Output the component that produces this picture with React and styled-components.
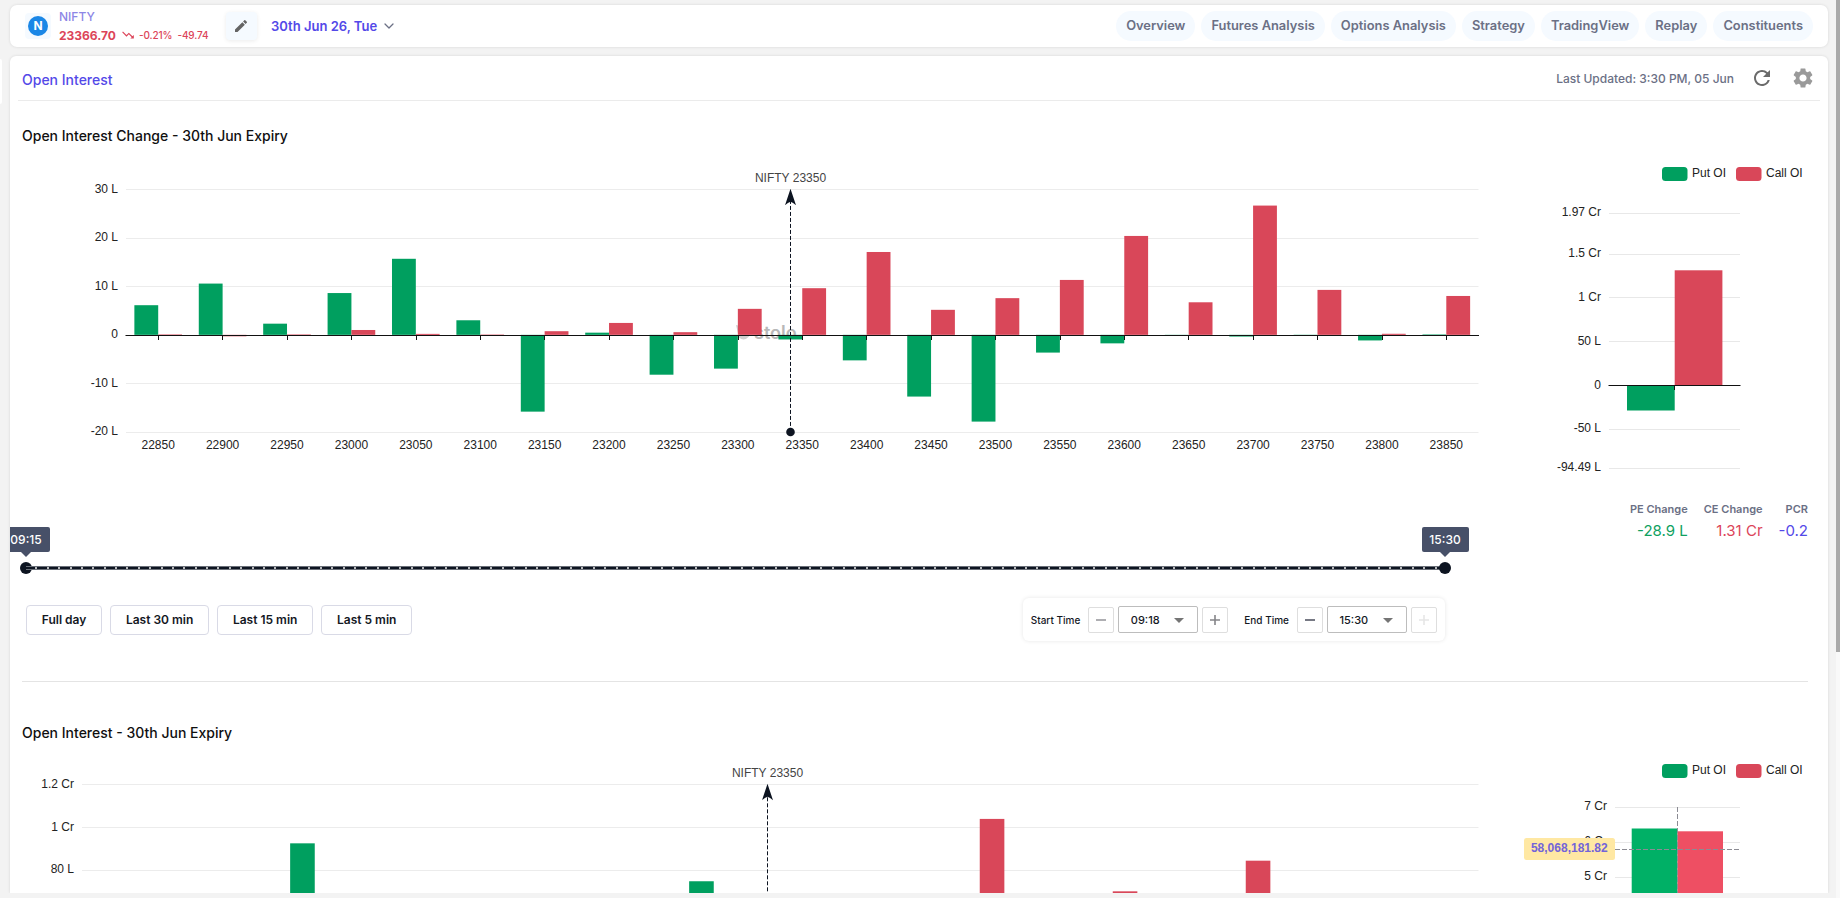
import React, { useState } from "react";
import styled, { createGlobalStyle } from "styled-components";
import { MdEdit, MdRefresh, MdSettings, MdTrendingDown, MdArrowDropDown } from "react-icons/md";
import { ChevronDown } from "lucide-react";

const GREEN = "#009f5f";
const RED = "#d94759";

const pages = [
  "Overview",
  "Futures Analysis",
  "Options Analysis",
  "Strategy",
  "TradingView",
  "Replay",
  "Constituents",
];

const strikes = Array.from({ length: 21 }, (_, i) => 22850 + i * 50);

// values in lakhs
const changePut = [
  6.1, 10.55, 2.3, 8.6, 15.65, 3, -15.8, 0.45, -8.2, -6.95, -0.95, -5.25, -12.7,
  -17.85, -3.65, -1.75, -0.15, -0.35, 0.04, -1.15, 0.1,
];
const changeCall = [
  0.1, -0.3, 0.1, 1.0, 0.2, 0.08, 0.75, 2.45, 0.55, 5.35, 9.6, 17.05, 5.15, 7.55,
  11.3, 20.35, 6.7, 26.6, 9.25, 0.22, 8.0,
];
const oiPut = [0, 0, 0, 92.4, 0, 0, 0, 0, 0, 74.7];
const oiCall = [0, 0, 0, 0, 0, 0, 0, 0, 0, 0, 0, 0, 0, 103.8, 0, 70, 0, 84.3];

const StrikeChart = ({ left, top, step, unit, ticks, zero, put, call, height, watermark }) => {
  const right = 1456.5;
  const band = (right - left) / strikes.length;
  const barWidth = band * 0.37;
  const zeroY = top + zero * step;
  const axisY = Math.round(zeroY) + 0.5;
  const bottom = top + step * (ticks.length - 1);
  const spot = Math.floor(left + band * 10.313) + 0.5;

  const bar = (value, x, color) => {
    if (!value) return null;
    const h = Math.abs(value) * unit;
    return (
      <rect
        x={x}
        y={value > 0 ? zeroY - h : zeroY}
        width={barWidth}
        height={h}
        fill={color}
      />
    );
  };

  return (
    <Chart width="1468" height={height}>
      {ticks.map((tick, i) => (
        <g key={tick}>
          <line
            x1={left}
            x2={right}
            y1={Math.round(top + i * step) + 0.5}
            y2={Math.round(top + i * step) + 0.5}
            stroke="#ececec"
          />
          <AxisLabel x={left - 8} y={Math.floor(top + i * step) + 4} textAnchor="end">
            {tick}
          </AxisLabel>
        </g>
      ))}
      {watermark && (
        <g>
          <path
            d="M714 165 l4.5 1 l2.5 6 q2.5 2 4 -1 l1 -4 q4 5 1 9.5 q-5 5.500 -10 1 z"
            fill="#cfcfcf"
          />
          <Watermark x="732" y="179">
            stolo
          </Watermark>
        </g>
      )}
      {strikes.map((strike, i) => (
        <g key={strike}>
          {bar(put[i], left + band * (i + 0.5) - barWidth, GREEN)}
          {bar(call[i], left + band * (i + 0.5), RED)}
        </g>
      ))}
      <line x1={left - 0.5} x2={right + 0.5} y1={axisY} y2={axisY} stroke="#111" />
      {strikes.map((strike, i) => {
        const x = Math.round(left + band * (i + 0.5) - 0.2) + 0.5;
        return (
          <g key={strike}>
            <line x1={x} x2={x} y1={axisY} y2={axisY + 4.5} stroke="#111" />
            <AxisLabel x={left + band * (i + 0.5)} y={Math.round(bottom + 17)} textAnchor="middle">
              {strike}
            </AxisLabel>
          </g>
        );
      })}
      <line
        x1={spot}
        x2={spot}
        y1={bottom}
        y2={top + 10}
        stroke="#0d1421"
        strokeDasharray="4 2"
      />
      <path
        d={`M${spot} ${top - 0.5} l5.5 16.5 q-3 -3 -5.5 -3.5 q-2.5 .5 -5.5 3.5 z`}
        fill="#0d1421"
      />
      <circle cx={spot} cy={bottom} r="4.3" fill="#0d1421" />
      <AxisLabel x={spot} y={Math.floor(top) - 7} textAnchor="middle" $soft>
        NIFTY 23350
      </AxisLabel>
    </Chart>
  );
};

const Legend = ({ y }) => (
  <g>
    <rect x="162" y={y} width="25.5" height="14" rx="3.5" fill={GREEN} />
    <AxisLabel x="192" y={y + 10}>
      Put OI
    </AxisLabel>
    <rect x="236" y={y} width="25.5" height="14" rx="3.5" fill={RED} />
    <AxisLabel x="266" y={y + 10}>
      Call OI
    </AxisLabel>
  </g>
);

// label, gridline y, baseline y
const totalTicks = [
  ["1.97 Cr", 53, 56],
  ["1.5 Cr", 94, 97],
  ["1 Cr", 137, 141],
  ["50 L", 181, 185],
  ["0", 225, 229],
  ["-50 L", 269, 272],
  ["-94.49 L", 308, 311],
];

const TotalChangeChart = () => (
  <Chart width="310" height="330">
    <Legend y={7} />
    {totalTicks.map(([label, y, baseline]) => (
      <g key={label}>
        <line x1="109" x2="240" y1={y + 0.5} y2={y + 0.5} stroke="#e8e8e8" />
        <AxisLabel x="101" y={baseline} textAnchor="end">
          {label}
        </AxisLabel>
      </g>
    ))}
    <rect x="127" y="225.5" width="47.7" height="25" fill={GREEN} />
    <rect x="174.7" y="110.3" width="47.7" height="115" fill={RED} />
    <path d="M108.5 225.5H240.5M174.5 225V230" stroke="#111" />
  </Chart>
);

const TotalOiChart = () => (
  <Chart width="310" height="300">
    <Legend y={6} />
    {[
      ["7 Cr", 49],
      ["6 Cr", 84],
      ["5 Cr", 119],
    ].map(([label, y]) => (
      <g key={label}>
        <line x1="115" x2="240" y1={y + 0.5} y2={y + 0.5} stroke="#e8e8e8" />
        <AxisLabel x="107" y={y + 3} textAnchor="end">
          {label}
        </AxisLabel>
      </g>
    ))}
    <rect x="131.7" y="70.5" width="45.8" height="200" fill="#00b066" />
    <rect x="177.5" y="73.3" width="45.5" height="200" fill="#ee4f63" />
    <path d="M177.5 49V300M115 91.5H240" stroke="#8b8b93" strokeDasharray="5 2" fill="none" />
    <rect x="24" y="80" width="91" height="22" rx="2.5" fill="#ffe8a3" />
    <PointerLabel x="69.3" y="94" textAnchor="middle">
      58,068,181.82
    </PointerLabel>
  </Chart>
);

const TimePicker = ({ label, value, minus, plus }) => (
  <>
    <TimeLabel>{label}</TimeLabel>
    <StepButton $color={minus}>
      <svg width="10" height="10">
        <path d="M0 5H10" stroke="currentColor" strokeWidth="1.6" />
      </svg>
    </StepButton>
    <TimeSelect>
      {value}
      <MdArrowDropDown size={24} color="#757575" />
    </TimeSelect>
    <StepButton $color={plus}>
      <svg width="10" height="10">
        <path d="M0 5H10M5 0V10" stroke="currentColor" strokeWidth="1.6" />
      </svg>
    </StepButton>
  </>
);

const App = () => {
  const [range] = useState(["09:15", "15:30"]);

  return (
    <Page>
      <GlobalStyle />
      <SideHandle />
      <Content>
        <TopBar>
          <SymbolBadge>
            <SymbolIcon>N</SymbolIcon>
          </SymbolBadge>
          <Quote>
            <SymbolName>NIFTY</SymbolName>
            <PriceRow>
              <Price>23366.70</Price>
              <MdTrendingDown size={14} />
              <Change>-0.21%</Change>
              <Change>-49.74</Change>
            </PriceRow>
          </Quote>
          <EditButton>
            <MdEdit size={16} />
          </EditButton>
          <Expiry>
            30th Jun 26, Tue
            <ChevronDown size={16} color="#6b7085" strokeWidth={1.9} />
          </Expiry>
          <Nav>
            {pages.map((page) => (
              <NavLink key={page}>{page}</NavLink>
            ))}
          </Nav>
        </TopBar>

        <Panel>
          <PanelHeader>
            <PanelTitle>Open Interest</PanelTitle>
            <Updated>Last Updated: 3:30 PM, 05 Jun</Updated>
            <MdRefresh size={24} color="#6b6b6b" />
            <MdSettings size={24} color="#9a9a9a" />
          </PanelHeader>

          <Section>
            <SectionTitle>Open Interest Change - 30th Jun Expiry</SectionTitle>
            <Columns>
              <LeftColumn>
                <StrikeChart
                  left={104}
                  top={29.2}
                  step={48.55}
                  unit={4.86}
                  zero={3}
                  ticks={["30 L", "20 L", "10 L", "0", "-10 L", "-20 L"]}
                  put={changePut}
                  call={changeCall}
                  height="367"
                  watermark
                />
                <SliderLabels>
                  {range.map((time) => (
                    <SliderLabel key={time}>{time}</SliderLabel>
                  ))}
                </SliderLabels>
                <Slider>
                  <Thumb />
                  <Track>
                    {Array.from({ length: 125 }, (_, i) => (
                      <Mark key={i} />
                    ))}
                  </Track>
                  <Thumb />
                </Slider>
                <Controls>
                  <PresetButton>Full day</PresetButton>
                  <PresetButton>Last 30 min</PresetButton>
                  <PresetButton>Last 15 min</PresetButton>
                  <PresetButton>Last 5 min</PresetButton>
                  <TimeBox>
                    <TimePicker label="Start Time" value="09:18" minus="#9a9a9f" plus="#858589" />
                    <Spacer />
                    <TimePicker label="End Time" value="15:30" minus="#555866" plus="#e6e6e6" />
                  </TimeBox>
                </Controls>
              </LeftColumn>
              <RightColumn>
                <TotalChangeChart />
                <Stats>
                  <Stat $color="#0fa15f">
                    <StatName>PE Change</StatName>-28.9 L
                  </Stat>
                  <Stat $color="#dc4459">
                    <StatName>CE Change</StatName>1.31 Cr
                  </Stat>
                  <Stat $color="#5349e8">
                    <StatName>PCR</StatName>-0.2
                  </Stat>
                </Stats>
              </RightColumn>
            </Columns>
          </Section>

          <Divider />

          <Section>
            <SectionTitle>Open Interest - 30th Jun Expiry</SectionTitle>
            <Columns $space="1px">
              <LeftColumn>
                <StrikeChart
                  left={60}
                  top={26.2}
                  step={42.85}
                  unit={2.1425}
                  zero={6}
                  ticks={["1.2 Cr", "1 Cr", "80 L", "60 L", "40 L", "20 L", "0"]}
                  put={oiPut}
                  call={oiCall}
                  height="320"
                />
              </LeftColumn>
              <RightColumn>
                <TotalOiChart />
              </RightColumn>
            </Columns>
          </Section>
        </Panel>
      </Content>
      <Scrollbar>
        <ScrollThumb />
      </Scrollbar>
    </Page>
  );
};

const GlobalStyle = createGlobalStyle`
  * {
    box-sizing: border-box;
  }

  body {
    margin: 0;
    overflow: hidden;
    background-color: #f3f3f3;
    font-family: Inter, "Liberation Sans", sans-serif;
    color: #14181f;
  }
`;

const Page = styled.div`
  display: flex;
  width: 100vw;
  height: 100vh;
  overflow: hidden;
`;

const SideHandle = styled.div`
  width: 2px;
  height: 45px;
  margin-top: 59px;
  background-color: #fff;
  border-radius: 0 3px 3px 0;
`;

const Content = styled.div`
  display: flex;
  flex-direction: column;
  flex: 1;
  gap: 9px;
  padding: 5px 8px;
`;

const TopBar = styled.header`
  display: flex;
  align-items: center;
  height: 42px;
  flex-shrink: 0;
  padding: 0 15px;
  background-color: #fff;
  border-radius: 7px;
  box-shadow: 0 0 3px rgba(0, 0, 0, 0.12);
`;

const SymbolBadge = styled.div`
  display: flex;
  align-items: center;
  justify-content: center;
  width: 26px;
  height: 26px;
  border-radius: 4px;
  background-color: #f5faff;
`;

const SymbolIcon = styled.div`
  width: 20px;
  height: 20px;
  border-radius: 50%;
  background-color: #1b87e6;
  color: #fff;
  font-size: 12px;
  font-weight: 700;
  line-height: 20px;
  text-align: center;
`;

const Quote = styled.div`
  margin-left: 8px;
  width: 150px;
`;

const SymbolName = styled.div`
  font-size: 12px;
  font-weight: 500;
  line-height: 18px;
  color: #8d86e6;
`;

const PriceRow = styled.div`
  display: flex;
  align-items: center;
  height: 18px;
  color: #dc4459;
  white-space: nowrap;

  svg {
    flex-shrink: 0;
    margin: 0 4px 0 5px;
  }
`;

const Price = styled.span`
  font-size: 12px;
  font-weight: 700;
`;

const Change = styled.span`
  font-size: 10px;
  font-weight: 500;
  letter-spacing: -0.1px;

  & + & {
    margin-left: 5px;
  }
`;

const EditButton = styled.button`
  display: flex;
  align-items: center;
  justify-content: center;
  width: 31px;
  height: 28px;
  margin-left: 16.5px;
  padding: 0;
  border: none;
  border-radius: 4px;
  background-color: #f5faff;
  box-shadow: 0 1px 4px rgba(0, 0, 0, 0.08);
  color: #646464;
`;

const Expiry = styled.div`
  display: flex;
  align-items: center;
  gap: 4px;
  margin: -1px 0 0 14.5px;
  font-size: 13px;
  font-weight: 600;
  color: #5349e8;
`;

const Nav = styled.nav`
  display: flex;
  gap: 6px;
  margin-left: auto;
`;

const NavLink = styled.a`
  padding: 0 10px;
  border-radius: 15px;
  background-color: #f5faff;
  font-size: 12.88px;
  font-weight: 600;
  line-height: 30px;
  color: #6b7085;
`;

const Panel = styled.main`
  flex: 1;
  min-height: 0;
  overflow: hidden;
  background-color: #fff;
  border-radius: 6px 6px 0 0;
  box-shadow: 0 0 3px rgba(0, 0, 0, 0.12);
  clip-path: inset(-3px -3px 0);
`;

const PanelHeader = styled.div`
  display: flex;
  align-items: center;
  height: 45px;
  margin: 0 8px;
  padding: 0 5px 0 4px;
  border-bottom: 1px solid #ebebeb;
`;

const PanelTitle = styled.h1`
  margin: 2px auto 0 0;
  font-size: 14px;
  font-weight: 500;
  color: #5349e8;
`;

const Updated = styled.span`
  margin-right: 16px;
  font-size: 12px;
  font-weight: 500;
  color: #6b7085;

  & + svg {
    margin-right: 17px;
  }
`;

const Section = styled.section`
  padding: 24px 0 0 12px;
`;

const SectionTitle = styled.h2`
  margin: 0;
  height: 35px;
  font-size: 14px;
  font-weight: 500;
  line-height: 22px;
  color: #101010;
`;

const Columns = styled.div`
  display: flex;
  padding-top: ${(props) => props.$space || 0};
`;

const LeftColumn = styled.div`
  width: 1478px;
`;

const RightColumn = styled.div`
  width: 310px;
`;

const Chart = styled.svg`
  display: block;
  overflow: visible;
`;

const AxisLabel = styled.text`
  font-family: "Liberation Sans", Arial, sans-serif;
  font-size: 12px;
  fill: ${(props) => (props.$soft ? "#444" : "#222")};
`;

const PointerLabel = styled(AxisLabel)`
  font-weight: bold;
  fill: #7364d9;
`;

const Watermark = styled.text`
  font-family: Inter, sans-serif;
  font-size: 18px;
  font-weight: 600;
  fill: #b8b8b8;
`;

const SliderLabels = styled.div`
  display: flex;
  justify-content: space-between;
  width: 1466px;
  margin-left: -19.5px;
`;

const SliderLabel = styled.div`
  position: relative;
  width: 47px;
  height: 25px;
  border-radius: 2px;
  background-color: #475068;
  color: #fff;
  font-size: 12px;
  font-weight: 500;
  line-height: 25px;
  text-align: center;

  &::after {
    content: "";
    position: absolute;
    left: 18px;
    top: 25px;
    border: 5.5px solid transparent;
    border-top-color: #475068;
    border-bottom: none;
  }
`;

const Slider = styled.div`
  display: flex;
  align-items: center;
  width: 1431px;
  height: 12px;
  margin: 10px 0 0 -2px;
`;

const Thumb = styled.div`
  width: 12px;
  height: 12px;
  border-radius: 50%;
  background-color: #0d1421;
`;

const Track = styled.div`
  display: flex;
  flex: 1;
  height: 4px;
  margin: 0 -6px;
  border: solid #6a6f78;
  border-width: 1px 0;
  background-color: #0d1421;
`;

const Mark = styled.span`
  flex: 1;
  border-right: 2px solid #b8babd;

  &:last-child {
    border-right: none;
  }
`;

const Controls = styled.div`
  display: flex;
  align-items: center;
  gap: 8px;
  width: 1419px;
  height: 43px;
  margin: 24px 0 0 4px;
`;

const PresetButton = styled.button`
  height: 30px;
  padding: 0 14.8px;
  border: 1px solid #d9dae6;
  border-radius: 4px;
  background-color: #fff;
  font-family: inherit;
  font-size: 12px;
  font-weight: 600;
  color: #14181f;
`;

const TimeBox = styled.div`
  display: flex;
  align-items: center;
  gap: 4px;
  height: 43px;
  margin-left: auto;
  padding: 0 8px;
  border-radius: 6px;
  box-shadow: 0 0 4px rgba(0, 0, 0, 0.1);
`;

const TimeLabel = styled.span`
  margin-right: 4px;
  font-size: 10px;
  font-weight: 500;
`;

const StepButton = styled.button`
  display: flex;
  align-items: center;
  justify-content: center;
  width: 26px;
  height: 26px;
  padding: 0;
  border: 1px solid #dedede;
  border-radius: 2px;
  background-color: #fff;
  color: ${(props) => props.$color};
`;

const TimeSelect = styled.div`
  display: flex;
  align-items: center;
  justify-content: space-between;
  width: 80px;
  height: 27px;
  padding: 0 6px 0 11.5px;
  border: 1px solid #bdbdbd;
  border-radius: 2px;
  font-size: 11px;
  font-weight: 500;
`;

const Spacer = styled.span`
  width: 8px;
`;

const Stats = styled.div`
  display: flex;
  justify-content: flex-end;
  gap: 16px;
  padding: 10px 2px 0 0;
`;

const Stat = styled.div`
  font-size: 15px;
  line-height: 26px;
  text-align: right;
  color: ${(props) => props.$color};
`;

const StatName = styled.div`
  font-size: 11px;
  font-weight: 600;
  line-height: 18px;
  color: #6b7085;
`;

const Divider = styled.hr`
  height: 1px;
  margin: 40px 20px 16px 12px;
  border: none;
  background-color: #e4e4e4;
`;

const Scrollbar = styled.div`
  width: 4px;
  background-color: #f9f9f9;
`;

const ScrollThumb = styled.div`
  height: 652px;
  background-color: #a9a9a9;
`;

export default App;
